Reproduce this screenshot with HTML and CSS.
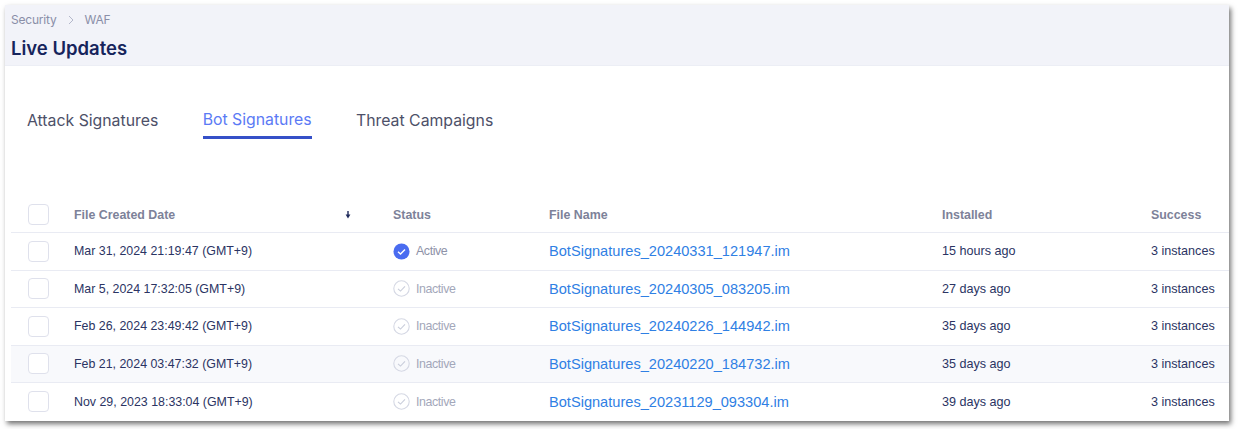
FILE: index.html
```html
<!DOCTYPE html>
<html lang="en">
<head>
    <meta charset="UTF-8">
    <title>Live Updates</title>
    <link rel="stylesheet" href="styles.css">
</head>
<body>
    <div class="card">
        <div class="page-header">
            <div class="breadcrumb">
                <span>Security</span>
                <svg class="crumb-arrow" width="6" height="10" viewBox="0 0 6 10"><path d="M1 1l4 4-4 4" fill="none" stroke="#b4b8cb" stroke-width="1"/></svg>
                <span>WAF</span>
            </div>
            <h1>Live Updates</h1>
        </div>

        <div class="tabs">
            <div class="tab">Attack Signatures</div>
            <div class="tab active">Bot Signatures</div>
            <div class="tab">Threat Campaigns</div>
        </div>

        <div class="table">
            <div class="row head">
                <div class="checkbox"></div>
                <div class="sort-col">
                    <span>File Created Date</span>
                    <svg width="6" height="8" viewBox="0 0 6 8"><path d="M3 0v4" stroke="#1f2a5c" stroke-width="1.4"/><path d="M0.6 3.6h4.8L3 7.4z" fill="#1f2a5c"/></svg>
                </div>
                <div>Status</div>
                <div>File Name</div>
                <div>Installed</div>
                <div>Success</div>
            </div>

            <div class="row">
                <div class="checkbox"></div>
                <div>Mar 31, 2024 21:19:47 (GMT+9)</div>
                <div class="status active-status">
                    <svg width="17" height="17" viewBox="0 0 17 17"><circle cx="8.5" cy="8.5" r="8" fill="#4a6cf0"/><path d="M5 8.8l2.5 2.3L12 6.4" fill="none" stroke="#fff" stroke-width="1.4"/></svg>
                    <span>Active</span>
                </div>
                <div class="file-link">BotSignatures_20240331_121947.im</div>
                <div class="cell-wide">15 hours ago</div>
                <div class="cell-wide">3 instances</div>
            </div>

            <div class="row">
                <div class="checkbox"></div>
                <div>Mar 5, 2024 17:32:05 (GMT+9)</div>
                <div class="status">
                    <svg width="17" height="17" viewBox="0 0 17 17"><circle cx="8.5" cy="8.5" r="7.7" fill="none" stroke="#d5d8e4" stroke-width="1.1"/><path d="M5 8.8l2.5 2.3L12 6.4" fill="none" stroke="#c9cddb" stroke-width="1.1"/></svg>
                    <span>Inactive</span>
                </div>
                <div class="file-link">BotSignatures_20240305_083205.im</div>
                <div class="cell-wide">27 days ago</div>
                <div class="cell-wide">3 instances</div>
            </div>

            <div class="row">
                <div class="checkbox"></div>
                <div>Feb 26, 2024 23:49:42 (GMT+9)</div>
                <div class="status">
                    <svg width="17" height="17" viewBox="0 0 17 17"><circle cx="8.5" cy="8.5" r="7.7" fill="none" stroke="#d5d8e4" stroke-width="1.1"/><path d="M5 8.8l2.5 2.3L12 6.4" fill="none" stroke="#c9cddb" stroke-width="1.1"/></svg>
                    <span>Inactive</span>
                </div>
                <div class="file-link">BotSignatures_20240226_144942.im</div>
                <div class="cell-wide">35 days ago</div>
                <div class="cell-wide">3 instances</div>
            </div>

            <div class="row hovered">
                <div class="checkbox"></div>
                <div>Feb 21, 2024 03:47:32 (GMT+9)</div>
                <div class="status">
                    <svg width="17" height="17" viewBox="0 0 17 17"><circle cx="8.5" cy="8.5" r="7.7" fill="none" stroke="#d5d8e4" stroke-width="1.1"/><path d="M5 8.8l2.5 2.3L12 6.4" fill="none" stroke="#c9cddb" stroke-width="1.1"/></svg>
                    <span>Inactive</span>
                </div>
                <div class="file-link">BotSignatures_20240220_184732.im</div>
                <div class="cell-wide">35 days ago</div>
                <div class="cell-wide">3 instances</div>
            </div>

            <div class="row last">
                <div class="checkbox"></div>
                <div>Nov 29, 2023 18:33:04 (GMT+9)</div>
                <div class="status">
                    <svg width="17" height="17" viewBox="0 0 17 17"><circle cx="8.5" cy="8.5" r="7.7" fill="none" stroke="#d5d8e4" stroke-width="1.1"/><path d="M5 8.8l2.5 2.3L12 6.4" fill="none" stroke="#c9cddb" stroke-width="1.1"/></svg>
                    <span>Inactive</span>
                </div>
                <div class="file-link">BotSignatures_20231129_093304.im</div>
                <div class="cell-wide">39 days ago</div>
                <div class="cell-wide">3 instances</div>
            </div>
        </div>
    </div>
</body>
</html>
```

FILE: styles.css
```css
html, body {
    margin: 0;
    background-color: white;
}

body {
    padding: 5px 0 0 5px;
    height: 429px;
    box-sizing: border-box;
    overflow: hidden;
    font-family: "Liberation Sans", Arial, sans-serif;
}

.card {
    width: 1224px;
    height: 416px;
    background-color: white;
    box-shadow: 2px 3px 5px rgba(0, 0, 0, 0.55);
}

.page-header {
    height: 61px;
    box-sizing: border-box;
    padding: 7px 0 0 6px;
    background-color: #f2f3f9;
    border-bottom: 1px solid #eceef5;
}

.breadcrumb {
    display: flex;
    align-items: center;
    gap: 11px;
    height: 15px;
    font-family: Inter, sans-serif;
    font-size: 12px;
    letter-spacing: -0.2px;
    color: #8a8fa8;
}

h1 {
    margin: 10px 0 0;
    font-family: Inter, sans-serif;
    font-size: 18.5px;
    line-height: 22px;
    font-weight: 600;
    color: #16245c;
}

.tabs {
    display: flex;
    gap: 44.4px;
    height: 73px;
    padding: 41px 0 0 22px;
}

.tab {
    height: 32px;
    font-family: Inter, sans-serif;
    font-size: 15.8px;
    line-height: 27px;
    color: #4d5068;
}

.tab.active {
    line-height: 25px;
    color: #5b7af5;
    border-bottom: 3px solid #3550c8;
    height: 29px;
}

.table {
    margin-left: 6px;
    padding-top: 15px;
}

.row {
    display: grid;
    grid-template-columns: 46px 319px 156px 393px 209px 1fr;
    align-items: center;
    height: 37.5px;
    box-sizing: border-box;
    padding-left: 17px;
    font-size: 12.4px;
    color: #2b3463;
    border-bottom: 1px solid #e9ebf3;
}

.row.head {
    height: 38px;
    padding-top: 2px;
    font-weight: 700;
    color: #7d8299;
}

.row.hovered {
    background-color: #f8f9fc;
}

.row.last {
    border-bottom: none;
}

.cell-wide {
    font-size: 12.6px;
}

.checkbox {
    width: 21px;
    height: 21px;
    box-sizing: border-box;
    background-color: white;
    border: 1px solid #dfe1ec;
    border-radius: 4px;
}

.sort-col {
    display: flex;
    justify-content: space-between;
    align-items: center;
    padding-right: 42px;
}

.status {
    display: flex;
    align-items: center;
    gap: 6px;
    letter-spacing: -0.4px;
    color: #a3a7ba;
}

.active-status {
    color: #8e92a8;
}

.file-link {
    font-size: 14.6px;
    color: #2f80e4;
}
```
